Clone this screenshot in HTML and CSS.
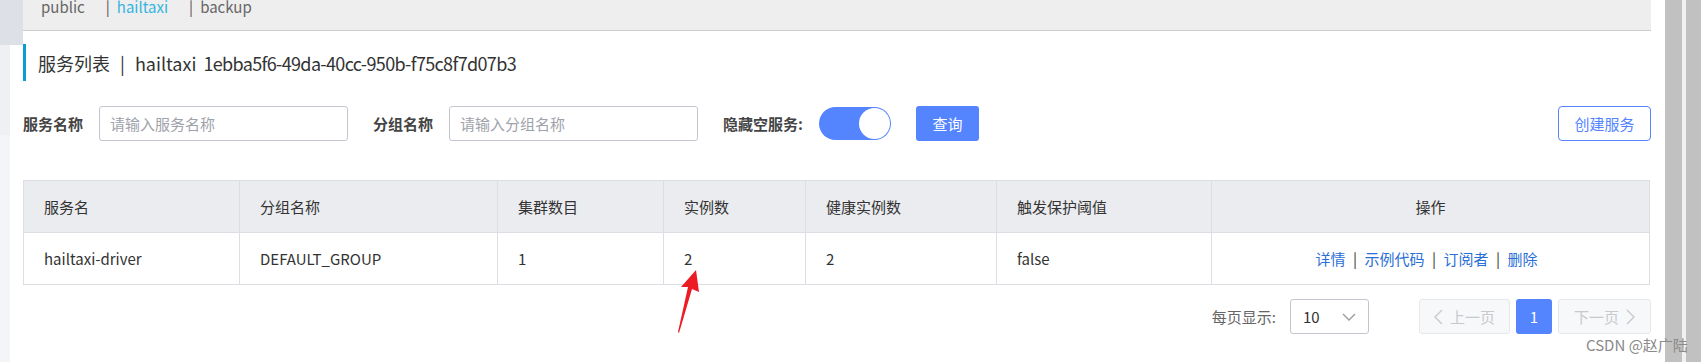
FILE: index.html
```html
<!DOCTYPE html>
<html lang="zh-CN">
<head>
    <meta charset="UTF-8">
    <meta name="viewport" content="width=device-width, initial-scale=1.0">
    <title>服务列表</title>
    <link rel="stylesheet" href="styles.css">
</head>
<body>
    <div class="page">
        <div class="sidebar">
            <div class="side-top"></div>
            <div class="side-strip">
                <div class="side-mid"></div>
            </div>
        </div>

        <div class="main">
            <div class="ns-bar">
                <span class="ns-item">public</span>
                <span class="ns-sep">|</span>
                <span class="ns-item active">hailtaxi</span>
                <span class="ns-sep">|</span>
                <span class="ns-item">backup</span>
            </div>

            <div class="title">
                <span>服务列表</span>
                <span class="title-sep">|</span>
                <span>hailtaxi</span>
                <span class="title-id">1ebba5f6-49da-40cc-950b-f75c8f7d07b3</span>
            </div>

            <div class="filters">
                <div class="field">
                    <label>服务名称</label>
                    <input type="text" class="text-input" placeholder="请输入服务名称">
                </div>
                <div class="field">
                    <label>分组名称</label>
                    <input type="text" class="text-input" placeholder="请输入分组名称">
                </div>
                <div class="field">
                    <label>隐藏空服务:</label>
                    <div class="switch"><span class="knob"></span></div>
                </div>
                <button class="btn-primary">查询</button>
                <button class="btn-outline">创建服务</button>
            </div>

            <table class="service-table">
                <colgroup>
                    <col class="c-name">
                    <col class="c-group">
                    <col class="c-cluster">
                    <col class="c-inst">
                    <col class="c-healthy">
                    <col class="c-threshold">
                    <col class="c-ops">
                </colgroup>
                <thead>
                    <tr>
                        <th>服务名</th>
                        <th>分组名称</th>
                        <th>集群数目</th>
                        <th>实例数</th>
                        <th>健康实例数</th>
                        <th>触发保护阈值</th>
                        <th class="ops">操作</th>
                    </tr>
                </thead>
                <tbody>
                    <tr>
                        <td>hailtaxi-driver</td>
                        <td>DEFAULT_GROUP</td>
                        <td>1</td>
                        <td>2</td>
                        <td>2</td>
                        <td>false</td>
                        <td class="ops">
                            <span class="op-links"><a>详情</a><span class="op-sep">|</span><a>示例代码</a><span class="op-sep">|</span><a>订阅者</a><span class="op-sep">|</span><a>删除</a></span>
                        </td>
                    </tr>
                </tbody>
            </table>

            <div class="pager">
                <span class="pager-label">每页显示:</span>
                <div class="page-size">
                    <span>10</span>
                    <svg width="14" height="8" viewBox="0 0 14 8"><polyline points="1,1 7,7 13,1" fill="none" stroke="#999" stroke-width="1.3"/></svg>
                </div>
                <div class="pages">
                    <button class="page-btn disabled prev">
                        <svg width="9" height="16" viewBox="0 0 9 16"><polyline points="8,1 1,8 8,15" fill="none" stroke="#c8c9cc" stroke-width="1.4"/></svg>
                        <span>上一页</span>
                    </button>
                    <button class="page-btn current">1</button>
                    <button class="page-btn disabled next">
                        <span>下一页</span>
                        <svg width="9" height="16" viewBox="0 0 9 16"><polyline points="1,1 8,8 1,15" fill="none" stroke="#c8c9cc" stroke-width="1.4"/></svg>
                    </button>
                </div>
            </div>
        </div>

        <div class="gutter"></div>
        <div class="scroll-a"></div>
        <div class="scroll-gap"></div>
        <div class="scroll-b"></div>

        <svg class="arrow" width="30" height="70" viewBox="0 0 30 70">
            <polygon points="24,0 27,22 20,19 7,63 6,62 16,17 9,17" fill="#ec1c24"/>
        </svg>
        <div class="watermark">CSDN @赵广陆</div>
    </div>
</body>
</html>
```

FILE: styles.css
```css
body {
    margin: 0;
    font-family: "Noto Sans CJK SC", sans-serif;
    font-size: 15px;
    color: #333;
    background: #fff;
}
.page {
    position: relative;
    display: flex;
    height: 362px;
    overflow: hidden;
}
.sidebar {
    width: 23px;
    flex-shrink: 0;
    display: flex;
    flex-direction: column;
}
.side-top {
    height: 45px;
    background: #dde0e6;
}
.side-strip {
    flex: 1;
    width: 10px;
    background: #f4f5f8;
}
.side-mid {
    height: 90px;
    background: #eef0f3;
}
.main {
    width: 1628px;
    flex-shrink: 0;
}
.gutter {
    width: 14px;
}
.scroll-a {
    width: 17px;
    background: #c1c1c1;
}
.scroll-gap {
    width: 4px;
    background: #f1f1f1;
}
.scroll-b {
    width: 15px;
    background: #c1c1c1;
}

/* namespace bar */
.ns-bar {
    height: 30px;
    background: #eee;
    border-bottom: 1px solid #ccc;
    display: flex;
    padding-left: 18px;
    line-height: 14px;
    font-size: 15px;
    color: #666;
}
.ns-item {
    margin-right: 21px;
}
.ns-sep {
    margin-right: 7px;
    color: #555;
}
.ns-item.active {
    color: #35b4e0;
}

/* title */
.title {
    margin-top: 13px;
    height: 37px;
    border-left: 3px solid #0e9bd3;
    padding-left: 12px;
    display: flex;
    align-items: center;
    font-size: 18px;
    color: #333;
}
.title-sep {
    margin: 0 10px;
}
.title-id {
    margin-left: 7px;
    letter-spacing: -0.65px;
}

/* filters */
.filters {
    margin-top: 25px;
    display: flex;
    align-items: center;
    height: 35px;
}
.field {
    display: flex;
    align-items: center;
    gap: 16px;
    margin-right: 25px;
}
.field label {
    font-weight: bold;
    color: #444;
}
.text-input {
    width: 249px;
    height: 35px;
    box-sizing: border-box;
    border: 1px solid #c4c6cf;
    border-radius: 3px;
    padding: 0 10px;
    font-family: inherit;
    font-size: 15px;
    outline: none;
}
.text-input::placeholder {
    color: #a0a2ab;
}
.switch {
    position: relative;
    width: 72px;
    height: 33px;
    border-radius: 17px;
    background: #5584ff;
}
.knob {
    position: absolute;
    top: 1px;
    right: 1px;
    width: 31px;
    height: 31px;
    border-radius: 50%;
    background: #fff;
}
button {
    font-family: inherit;
    font-size: 15px;
    cursor: pointer;
}
.btn-primary {
    width: 63px;
    height: 35px;
    border: none;
    border-radius: 3px;
    background: #5584ff;
    color: #fff;
}
.btn-outline {
    margin-left: auto;
    width: 93px;
    height: 35px;
    border: 1px solid #5584ff;
    border-radius: 4px;
    background: #fff;
    color: #5584ff;
}

/* table */
.service-table {
    margin-top: 39px;
    width: 1627px;
    table-layout: fixed;
    border-collapse: collapse;
}
.c-name { width: 216px; }
.c-group { width: 258px; }
.c-cluster { width: 166px; }
.c-inst { width: 142px; }
.c-healthy { width: 191px; }
.c-threshold { width: 215px; }
.service-table th,
.service-table td {
    height: 51px;
    padding: 0 20px;
    border: 1px solid #dcdee3;
    text-align: left;
    font-weight: normal;
    color: #333;
}
.service-table th {
    background: #ebecf0;
}
.service-table .ops {
    text-align: center;
}
.op-links {
    margin-right: 8px;
}
.ops a {
    color: #2a6fd6;
}
.op-sep {
    margin: 0 7.5px;
    color: #333;
}

/* pager */
.pager {
    margin-top: 14px;
    height: 35px;
    display: flex;
    justify-content: flex-end;
    align-items: center;
}
.pager-label {
    color: #666;
}
.page-size {
    margin-left: 14px;
    width: 79px;
    height: 35px;
    box-sizing: border-box;
    border: 1px solid #c4c6cf;
    border-radius: 3px;
    display: flex;
    align-items: center;
    justify-content: space-between;
    padding: 0 12px;
}
.pages {
    margin-left: 50px;
    display: flex;
    gap: 6px;
}
.page-btn {
    height: 35px;
    border-radius: 3px;
    display: flex;
    align-items: center;
    justify-content: center;
    gap: 7px;
}
.page-btn.disabled {
    border: 1px solid #e6e7eb;
    background: #f7f8fa;
    color: #c8c9cc;
}
.page-btn.prev {
    width: 91px;
}
.page-btn.next {
    width: 93px;
}
.page-btn.current {
    width: 36px;
    border: none;
    background: #5584ff;
    color: #fff;
}

/* overlays */
.arrow {
    position: absolute;
    left: 672px;
    top: 270px;
}
.watermark {
    position: absolute;
    left: 1586px;
    top: 334px;
    font-size: 15px;
    color: #8a8a8a;
}
```
